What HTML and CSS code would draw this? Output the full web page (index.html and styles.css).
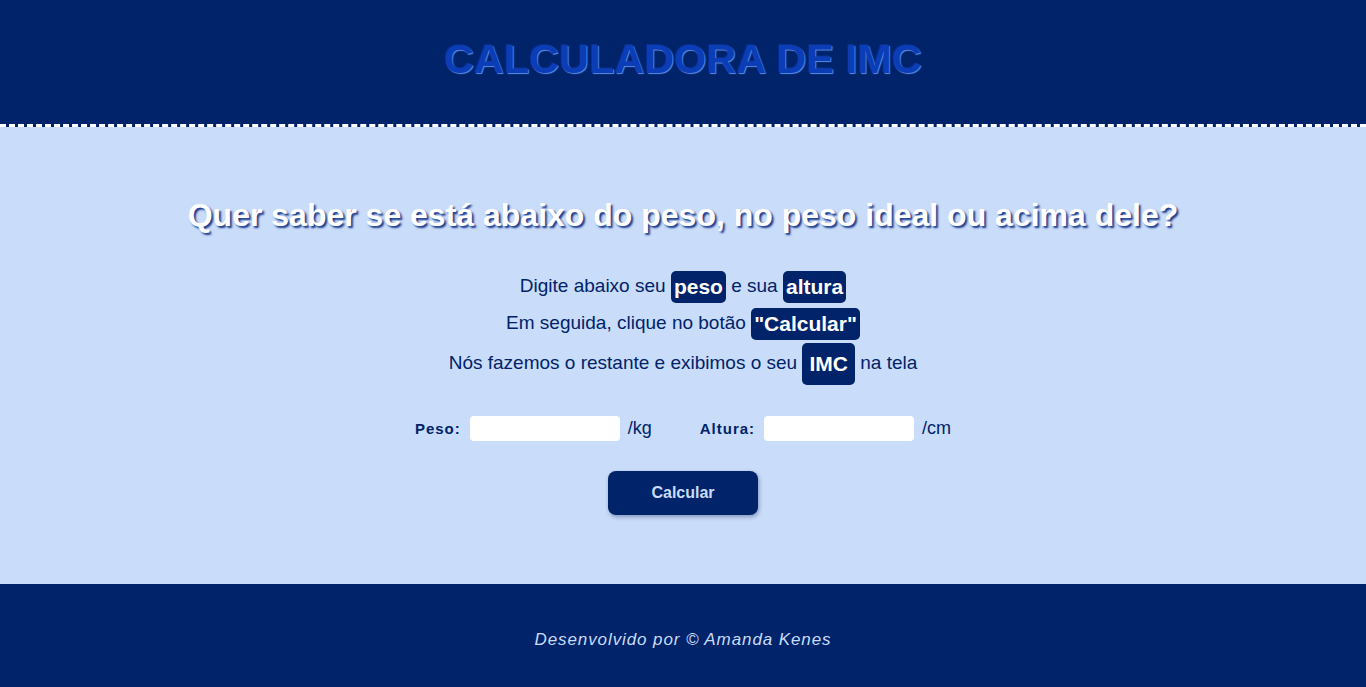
FILE: index.html
```html
<!DOCTYPE html>
<html lang="pt-BR">
<head>
<meta charset="utf-8">
<title>Calculadora de IMC</title>
<link rel="stylesheet" href="styles.css">
</head>
<body>
<header class="topo">
  <h1 class="titulo">CALCULADORA DE IMC</h1>
</header>
<main class="conteudo">
  <h2 class="pergunta">Quer saber se está abaixo do peso, no peso ideal ou acima dele?</h2>
  <div class="instrucoes">
    <p class="linha">Digite abaixo seu <span class="destaque">peso</span> e sua <span class="destaque">altura</span></p>
    <p class="linha">Em seguida, clique no botão <span class="destaque">"Calcular"</span></p>
    <p class="linha">Nós fazemos o restante e exibimos o seu <span class="destaque destaque-grande">IMC</span> na tela</p>
  </div>
  <form class="formulario">
    <div class="campo">
      <label class="rotulo" for="peso">Peso:</label>
      <input class="entrada" id="peso" type="text">
      <span class="unidade">/kg</span>
    </div>
    <div class="campo">
      <label class="rotulo" for="altura">Altura:</label>
      <input class="entrada" id="altura" type="text">
      <span class="unidade">/cm</span>
    </div>
  </form>
  <button class="botao" type="button">Calcular</button>
</main>
<footer class="rodape">
  <p class="credito">Desenvolvido por © Amanda Kenes</p>
</footer>
</body>
</html>
```
FILE: styles.css
```css
* { box-sizing: border-box; }
html, body { margin: 0; padding: 0; }
body {
  font-family: "Liberation Sans", Arial, sans-serif;
  background: #c9dcf9;
  color: #00236a;
}
.topo {
  height: 127px;
  background: #00236a;
  border-bottom: 3px dashed #ffffff;
  display: flex;
  align-items: center;
  justify-content: center;
}
.titulo {
  margin: 0;
  font-size: 41px;
  font-weight: 700;
  letter-spacing: 0.3px;
  color: #0b3db6;
  text-shadow: 1px 1px 1px #5d8ee4, -1px -1px 0 #0a2f8a;
  position: relative;
  top: -3px;
}
.conteudo {
  background: #c9dcf9;
  height: 457px;
  display: flex;
  flex-direction: column;
  align-items: center;
  padding-top: 69px;
}
.pergunta {
  margin: 0;
  font-size: 32px;
  font-weight: 700;
  color: #ffffff;
  text-shadow: 2px 2px 2px #1a3a8c;
  line-height: 38px;
}
.instrucoes {
  margin-top: 35px;
  display: flex;
  flex-direction: column;
  align-items: center;
  gap: 3px;
}
.linha {
  margin: 0;
  font-size: 19px;
  line-height: 33px;
  color: #00236a;
}
.destaque {
  display: inline-block;
  background: #00236a;
  color: #ffffff;
  font-weight: 700;
  padding: 0 3px;
  border-radius: 5px;
  line-height: 32px;
  font-size: 21px;
  vertical-align: middle;
}
.destaque-grande {
  padding: 5px 7px;
}
.formulario {
  margin-top: 31px;
  display: flex;
  gap: 48px;
}
.campo {
  display: flex;
  align-items: center;
  gap: 8px;
}
.rotulo {
  font-size: 15px;
  font-weight: 700;
  letter-spacing: 1px;
  color: #00236a;
}
.entrada {
  width: 150px;
  height: 25px;
  border: none;
  border-radius: 4px;
  background: #ffffff;
  margin-left: 1px;
}
.unidade {
  font-size: 18px;
  color: #00236a;
}
.botao {
  margin-top: 30px;
  width: 150px;
  height: 44px;
  border: none;
  border-radius: 8px;
  background: #00236a;
  color: #c9dcf9;
  font-family: "Liberation Sans", Arial, sans-serif;
  font-size: 16px;
  font-weight: 700;
  box-shadow: 1px 2px 4px rgba(0, 20, 80, 0.35);
}
.rodape {
  background: #00236a;
  height: 103px;
  display: flex;
  justify-content: center;
  padding-top: 46px;
}
.credito {
  margin: 0;
  font-size: 17px;
  font-style: italic;
  letter-spacing: 0.9px;
  color: #c9dcf9;
}
```
